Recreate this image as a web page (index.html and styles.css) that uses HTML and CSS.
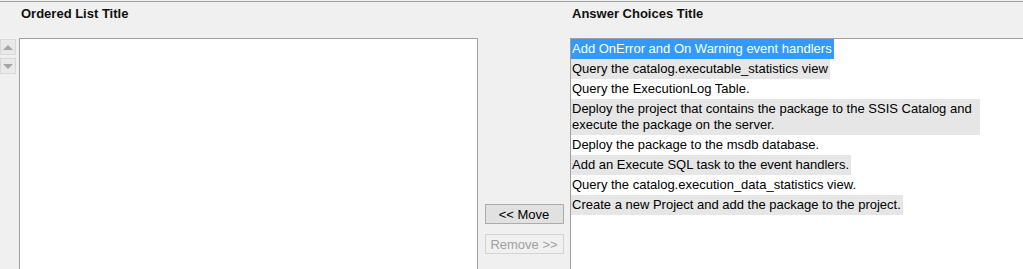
FILE: index.html
```html
<!DOCTYPE html>
<html lang="en">
<head>
    <meta charset="UTF-8">
    <title>Ordered List Question</title>
    <link rel="stylesheet" href="styles.css">
</head>
<body>
    <div class="question">
        <div class="title title-left">Ordered List Title</div>
        <div class="title title-right">Answer Choices Title</div>

        <div class="arrows">
            <button class="arrow-btn" disabled><span class="tri tri-up"></span></button>
            <button class="arrow-btn" disabled><span class="tri tri-down"></span></button>
        </div>

        <div class="list-box ordered"></div>

        <div class="actions">
            <button class="move-btn">&lt;&lt; Move</button>
            <button class="move-btn" disabled>Remove &gt;&gt;</button>
        </div>

        <div class="list-box choices">
            <div class="choice selected">Add OnError and On Warning event handlers</div>
            <div class="choice alt">Query the catalog.executable_statistics view</div>
            <div class="choice">Query the ExecutionLog Table.</div>
            <div class="choice alt">Deploy the project that contains the package to the SSIS Catalog and execute the package on the server.</div>
            <div class="choice">Deploy the package to the msdb database.</div>
            <div class="choice alt">Add an Execute SQL task to the event handlers.</div>
            <div class="choice">Query the catalog.execution_data_statistics view.</div>
            <div class="choice alt">Create a new Project and add the package to the project.</div>
        </div>
    </div>
</body>
</html>
```

FILE: styles.css
```css
body {
    margin: 0;
    padding-top: 1px;
    background: #f0f0f0;
    font-family: "Liberation Sans", Arial, sans-serif;
    font-size: 13px;
    color: #000;
    overflow: hidden;
}
.question {
    display: grid;
    grid-template-columns: 19px 459px 92px 1fr;
    grid-template-rows: 36px 231px;
    border-top: 1px solid #a0a0a0;
}
.title {
    font-weight: bold;
    padding: 4px 0 0 2px;
    color: #111;
}
.title-left { grid-column: 2; }
.title-right { grid-column: 4; }

.arrows {
    grid-column: 1;
    display: flex;
    flex-direction: column;
    gap: 3px;
    padding-top: 1px;
}
.arrow-btn {
    width: 16px;
    height: 16px;
    margin: 0;
    padding: 0;
    border: 1px solid #d9d9d9;
    background: #e9e9e9;
    display: flex;
    align-items: center;
    justify-content: center;
}
.tri {
    width: 0;
    height: 0;
    border-left: 5px solid transparent;
    border-right: 5px solid transparent;
}
.tri-up { border-bottom: 5px solid #a6a6a6; }
.tri-down { border-top: 5px solid #a6a6a6; }

.list-box {
    background: #fff;
    border: 1px solid #a0a0a0;
    border-right: none;
    border-bottom: none;
    box-sizing: border-box;
    overflow: hidden;
}
.ordered {
    grid-column: 2;
    border-right: 1px solid #a0a0a0;
}
.choices {
    grid-column: 4;
    display: flex;
    flex-direction: column;
    align-items: flex-start;
}

.choice {
    max-width: 406px;
    padding: 2px 2px 2px 1px;
    line-height: 16px;
}
.choice.alt { background: #e6e6e6; }
.choice.selected {
    background: #3399ff;
    color: #fff;
}

.actions {
    grid-column: 3;
    display: flex;
    flex-direction: column;
    align-items: center;
    gap: 10px;
    padding-top: 166px;
}
.move-btn {
    width: 79px;
    height: 20px;
    margin: 0;
    padding: 0;
    font-family: "Liberation Sans", Arial, sans-serif;
    font-size: 13px;
    color: #000;
    background: #e1e1e1;
    border: 1px solid #adadad;
}
.move-btn:disabled {
    color: #a0a0a0;
    background: #f0f0f0;
    border-color: #d4d4d4;
}
```
